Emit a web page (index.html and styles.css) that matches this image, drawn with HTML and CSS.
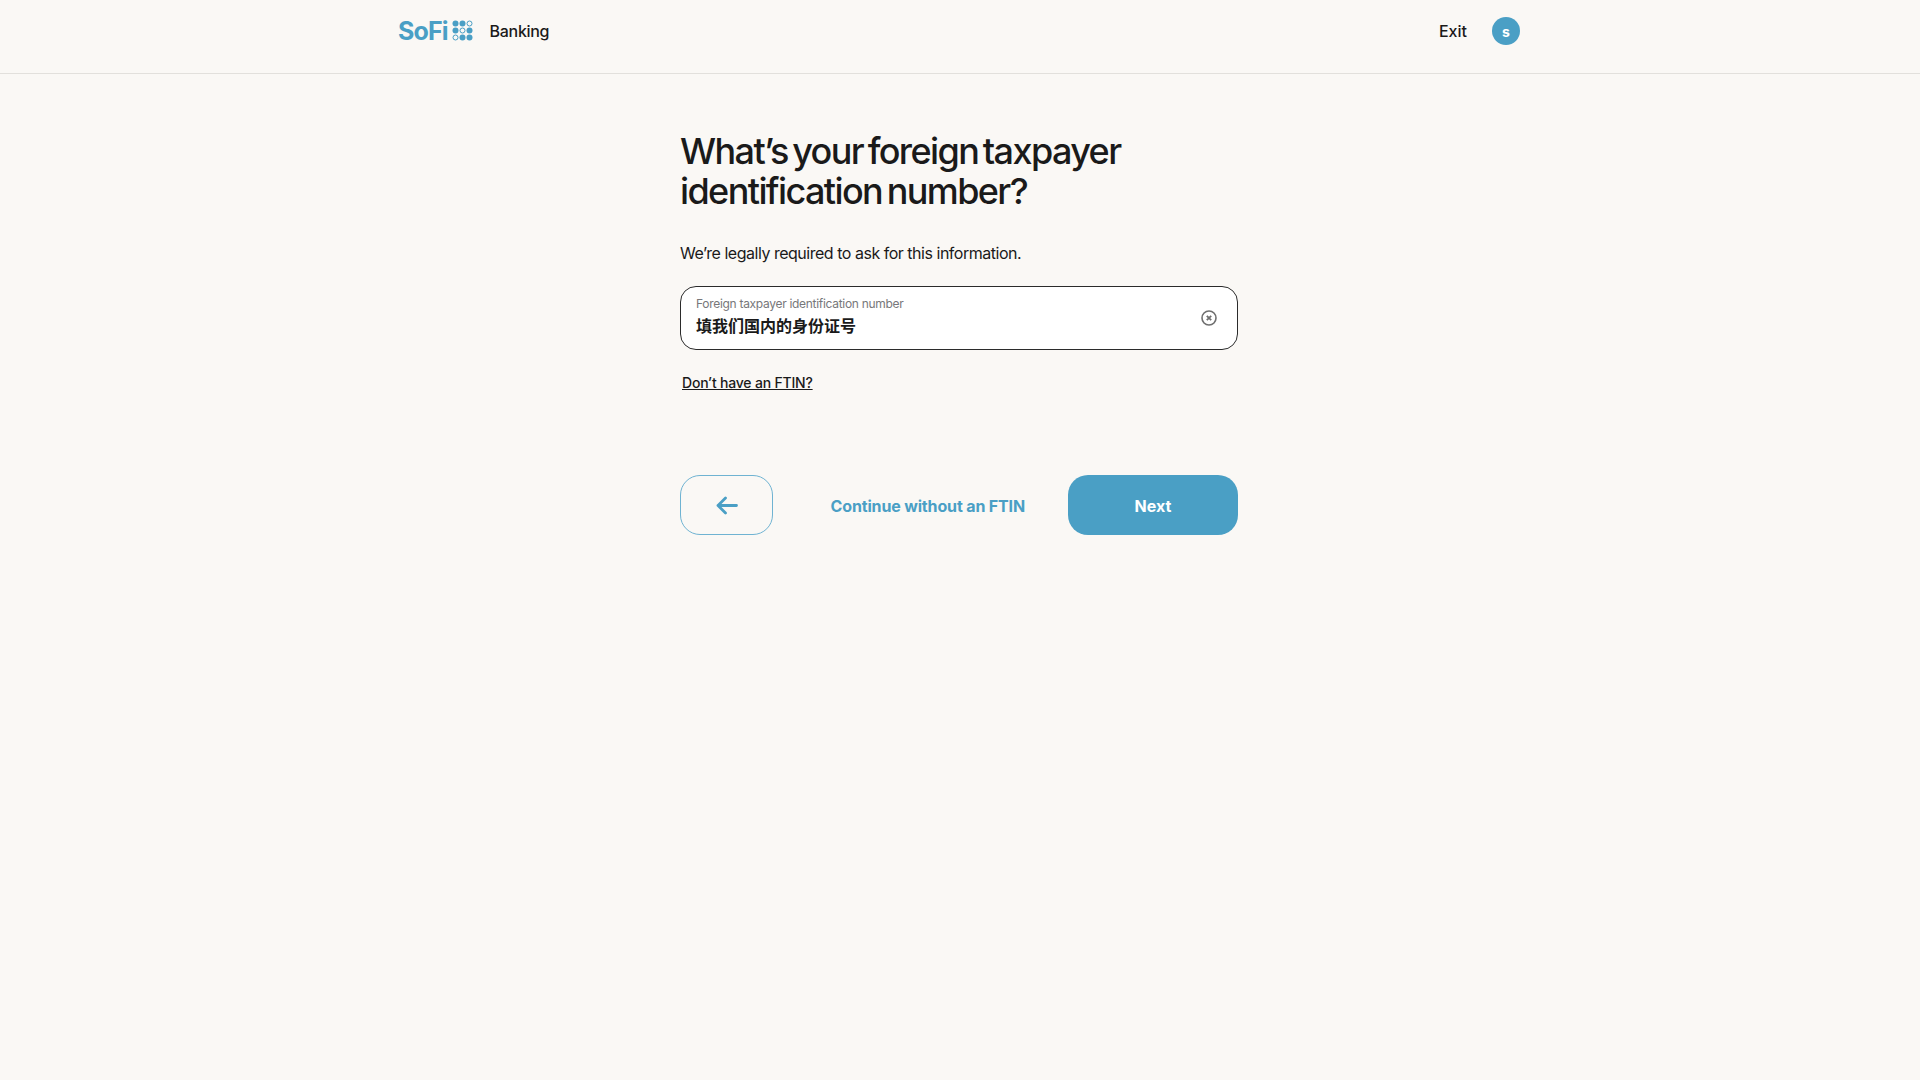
FILE: index.html
```html
<!DOCTYPE html>
<html lang="en">
<head>
    <title>Foreign taxpayer identification number</title>
    <meta name="viewport" content="width=device-width, initial-scale=1" />
    <link rel="stylesheet" href="styles.css">
</head>
<body>
<header class="topbar">
    <div class="topbar-inner">
        <a class="brand" href="#">
            <span class="brand-name">SoFi</span>
            <svg class="brand-dots" width="21" height="21" viewBox="0 0 21 21">
                <circle cx="3.5" cy="3.5" r="3" fill="#4a9fc5"/>
                <circle cx="10.5" cy="3.5" r="3" fill="#4a9fc5"/>
                <circle cx="17.5" cy="3.5" r="2.5" fill="none" stroke="#4a9fc5"/>
                <circle cx="3.5" cy="10.5" r="3" fill="#4a9fc5"/>
                <circle cx="10.5" cy="10.5" r="2.5" fill="none" stroke="#4a9fc5"/>
                <circle cx="17.5" cy="10.5" r="3" fill="#4a9fc5"/>
                <circle cx="3.5" cy="17.5" r="2.5" fill="none" stroke="#4a9fc5"/>
                <circle cx="10.5" cy="17.5" r="3" fill="#4a9fc5"/>
                <circle cx="17.5" cy="17.5" r="3" fill="#4a9fc5"/>
            </svg>
        </a>
        <span class="section-name">Banking</span>
        <a class="exit" href="#">Exit</a>
        <span class="avatar">s</span>
    </div>
</header>

<main class="step">
    <h1>What’s your foreign taxpayer identification number?</h1>
    <p class="lead">We’re legally required to ask for this information.</p>

    <div class="field">
        <div class="field-text">
            <label class="field-label">Foreign taxpayer identification number</label>
            <div class="field-value">填我们国内的身份证号</div>
        </div>
        <svg class="field-clear" width="18" height="18" viewBox="0 0 18 18" fill="none" stroke="#6f6f6f">
            <circle cx="9" cy="9" r="7" stroke-width="1.6"/>
            <path d="M6.8 6.8l4.4 4.4M11.2 6.8l-4.4 4.4" stroke-width="1.8"/>
        </svg>
    </div>

    <a class="help-link" href="#">Don’t have an FTIN?</a>

    <div class="actions">
        <button class="btn-back" type="button">
            <svg width="22" height="20" viewBox="0 0 22 20" fill="none" stroke="#4a9fc5" stroke-width="2.8" stroke-linecap="round" stroke-linejoin="round">
                <path d="M20.5 10.5H2M9.5 3L2 10.5l7.5 7.5"/>
            </svg>
        </button>
        <a class="btn-skip" href="#">Continue without an FTIN</a>
        <button class="btn-next" type="button">Next</button>
    </div>
</main>
</body>
</html>
```

FILE: styles.css
```css
body {
    margin: 0;
    min-height: 1080px;
    background: #faf8f5;
    color: #1a1a1a;
    font-family: "Inter", "Noto Sans CJK SC", sans-serif;
}

a {
    text-decoration: none;
    color: inherit;
}

.topbar {
    height: 73px;
    border-bottom: 1px solid #e2e0dc;
}

.topbar-inner {
    width: 1122px;
    height: 61px;
    margin-left: 398px;
    display: flex;
    align-items: center;
}

.brand {
    display: flex;
    align-items: center;
    gap: 4px;
}

.brand-name {
    font-size: 25px;
    font-weight: 700;
    letter-spacing: -0.9px;
    color: #4a9fc5;
}

.section-name {
    margin-left: 17px;
    font-size: 16px;
    font-weight: 500;
    letter-spacing: -0.3px;
}

.exit {
    margin-left: auto;
    font-size: 16px;
    font-weight: 500;
}

.avatar {
    margin-left: 25px;
    width: 28px;
    height: 26px;
    padding-top: 2px;
    border-radius: 50%;
    background: #4a9fc5;
    color: #fff;
    font-size: 14px;
    font-weight: 700;
    display: flex;
    align-items: center;
    justify-content: center;
}

.step {
    width: 558px;
    margin-left: 680px;
    padding-top: 57px;
}

h1 {
    margin: 0;
    font-size: 36px;
    line-height: 40px;
    font-weight: 500;
    letter-spacing: -1.6px;
    word-spacing: -3.5px;
}

.lead {
    margin: 31px 0 0;
    font-size: 16px;
    line-height: 22px;
    letter-spacing: -0.48px;
}

.field {
    margin-top: 22px;
    height: 64px;
    box-sizing: border-box;
    padding: 0 19px 0 15px;
    display: flex;
    align-items: center;
    justify-content: space-between;
    background: #fff;
    border: 1px solid #2b2b2b;
    border-radius: 16px;
}

.field-text {
    margin-top: -3px;
}

.field-label {
    display: block;
    font-size: 12px;
    line-height: 16px;
    letter-spacing: -0.3px;
    color: #77777a;
}

.field-value {
    margin-top: 3px;
    font-size: 16px;
    line-height: 22px;
    font-weight: 600;
}

.help-link {
    display: inline-block;
    margin: 23px 0 0 2px;
    font-size: 14px;
    line-height: 20px;
    font-weight: 500;
    letter-spacing: -0.2px;
    text-decoration: underline;
}

.actions {
    margin-top: 82px;
    display: flex;
    align-items: center;
}

.actions button {
    height: 60px;
    border-radius: 20px;
    cursor: pointer;
    font-family: inherit;
}

.btn-back {
    width: 93px;
    display: flex;
    align-items: center;
    justify-content: center;
    background: none;
    border: 1px solid #6fb3d2;
}

.btn-skip {
    margin-left: auto;
    margin-right: 43px;
    padding-top: 1px;
    font-size: 16px;
    font-weight: 700;
    letter-spacing: -0.15px;
    color: #4a9fc5;
}

.btn-next {
    width: 170px;
    padding-top: 2px;
    background: #4a9fc5;
    border: 0;
    color: #fff;
    font-size: 16px;
    font-weight: 700;
}
```
